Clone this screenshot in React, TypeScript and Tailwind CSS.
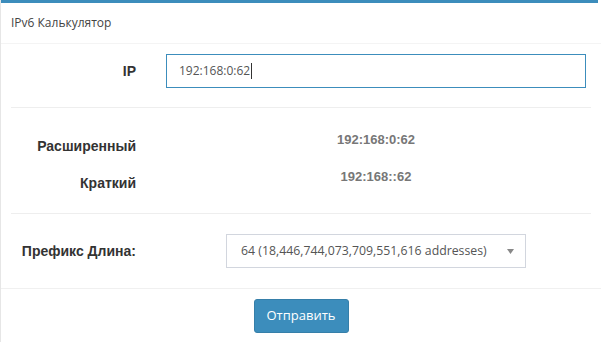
import React from "react";

export default function App() {
  const sans = { fontFamily: '"Open Sans", "Noto Sans", sans-serif' };
  const arial = { fontFamily: '"Liberation Sans", Arial, sans-serif' };
  return (
    <div className="w-[601px] h-[342px] bg-white overflow-hidden" style={sans}>
      <div className="w-[601px] h-[342px] border-l border-[#e6e6e6] bg-white">
        <div className="w-[597px] h-[3px] bg-[#3c8dbc]" />
        <div className="h-[41px] flex items-center pl-[10px] text-[12px] text-[#444] border-b border-[#f4f4f4]">
          IPv6 Калькулятор
        </div>
        <div className="px-[10px] pt-[10px]">
          <div className="flex items-center h-[34px]">
            <div className="w-[125px] text-right text-[14px] font-bold text-[#333]" style={arial}>
              IP
            </div>
            <div className="ml-[30px] w-[420px] h-[34px] border border-[#3c8dbc] flex items-center px-[12px] text-[12px] text-[#555]">
              <span>192:168:0:62</span>
              <span className="w-px h-[16px] bg-[#333] ml-[1px]" />
            </div>
          </div>
          <div className="mt-[19px] w-[580px] border-t border-[#eee]" />
          <div className="pt-[22px]">
            <div className="flex items-start">
              <div className="w-[125px] pt-[6px] text-right text-[14px] leading-[20px] font-bold text-[#333]" style={arial}>
                Расширенный
              </div>
              <div className="ml-[90px] w-[300px] text-center text-[13px] leading-[20px] font-bold text-[#777]" style={arial}>
                192:168:0:62
              </div>
            </div>
            <div className="flex items-start mt-[11px]">
              <div className="w-[125px] pt-[6px] text-right text-[14px] leading-[20px] font-bold text-[#333]" style={arial}>
                Краткий
              </div>
              <div className="ml-[90px] w-[300px] text-center text-[13px] leading-[20px] font-bold text-[#777]" style={arial}>
                192:168::62
              </div>
            </div>
          </div>
          <div className="mt-[20px] w-[580px] border-t border-[#eee]" />
          <div className="mt-[20px] flex items-center h-[34px]">
            <div className="w-[125px] text-right text-[14px] font-bold text-[#333]" style={arial}>
              Префикс Длина:
            </div>
            <div className="ml-[90px] w-[300px] h-[34px] border border-[#d2d6de] flex items-center justify-between pl-[14px] pr-[11px] text-[12.3px] text-[#555]">
              <span>64 (18,446,744,073,709,551,616 addresses)</span>
              <svg width="7" height="5" viewBox="0 0 7 5">
                <path d="M0 0 L7 0 L3.5 5 Z" fill="#888" />
              </svg>
            </div>
          </div>
        </div>
        <div className="mt-[20px] border-t border-[#f0f0f0] pt-[10px] flex justify-center">
          <button className="w-[95px] h-[34px] rounded-[3px] bg-[#3c8dbc] border border-[#367fa9] text-white text-[13px]">
            Отправить
          </button>
        </div>
      </div>
    </div>
  );
}
